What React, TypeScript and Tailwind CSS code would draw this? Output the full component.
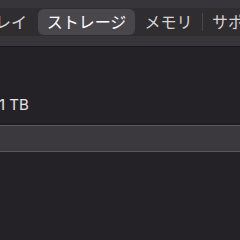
export default function App() {
    return (
        <div className="w-[240px] h-[240px] overflow-hidden bg-[#252227] flex flex-col" style={{ fontFamily: '"Noto Sans", "Noto Sans CJK JP", sans-serif' }}>
            <div className="h-[47px] shrink-0 bg-[#38353a] border-b border-[#1b191c] pt-[8px]">
                <div className="flex h-[28px] items-center bg-[#302d31] -ml-[90px] w-[400px] rounded-md">
                    <div className="w-[128px] h-[26px] flex items-center justify-end pr-[11px] text-[16px] text-[#d6d4d7] whitespace-nowrap">
                        ディスプレイ
                    </div>
                    <div className="w-[97px] h-[26px] flex items-center justify-center rounded-md bg-[#4a474c] text-[16px] text-white whitespace-nowrap">
                        ストレージ
                    </div>
                    <div className="w-[67px] h-[26px] flex items-center justify-center text-[16px] text-[#d6d4d7] whitespace-nowrap">
                        メモリ
                    </div>
                    <div className="w-[1px] h-[18px] bg-[#4a474c]" />
                    <div className="h-[26px] flex items-center pl-[9px] text-[16px] text-[#d6d4d7] whitespace-nowrap">
                        サポート
                    </div>
                </div>
            </div>
            <div className="h-[76px] shrink-0 flex items-end pb-[11px]">
                <span className="text-[15px] text-[#e6e4e7] -ml-[1px] leading-none" style={{ fontFamily: '"Inter", "Noto Sans", sans-serif' }}>
                    1 TB
                </span>
            </div>
            <div className="h-[2px] bg-[#1f1d20]" />
            <div className="h-[27px] bg-[#3c393e] border-y border-[#5a575b]" />
            <div className="flex-1" />
        </div>
    );
}
